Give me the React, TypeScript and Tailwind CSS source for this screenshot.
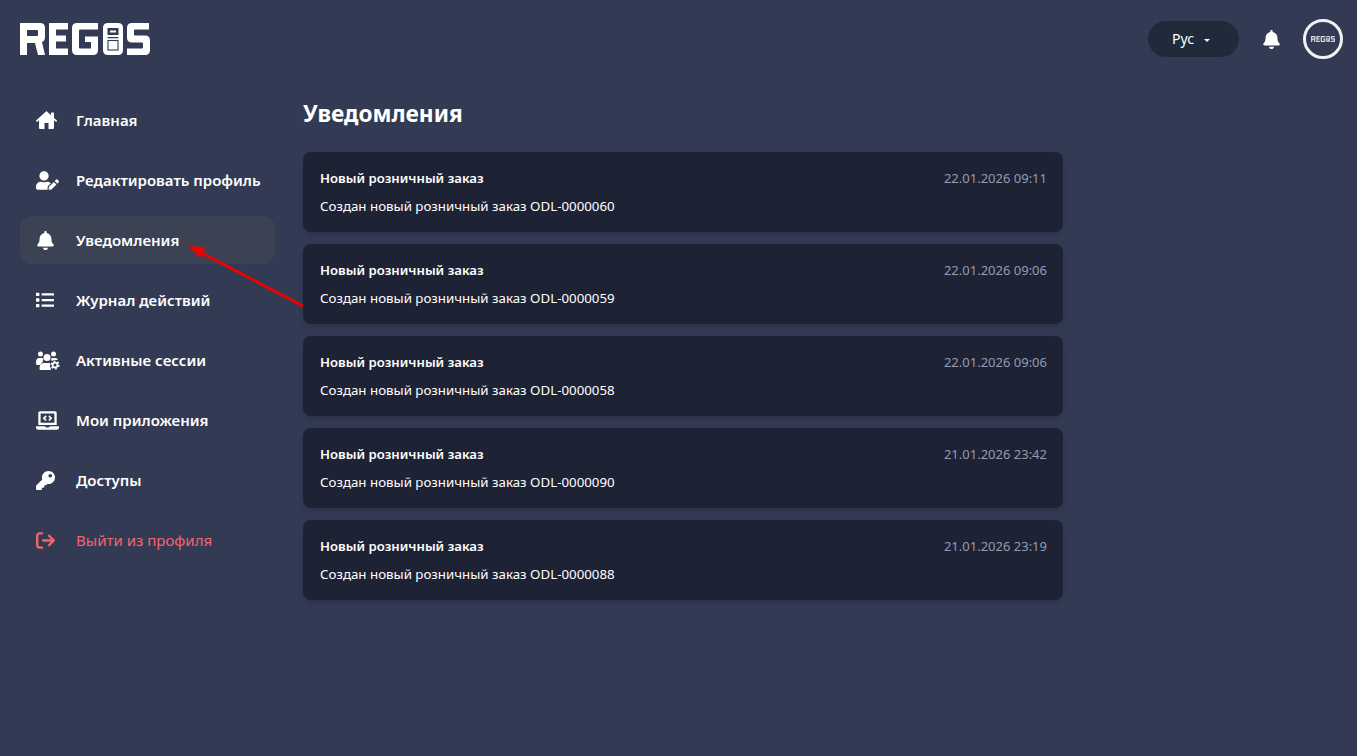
import type { ReactNode } from "react";
import { FaBell, FaKey, FaLaptopCode, FaList, FaUserEdit } from "react-icons/fa";
import { FaArrowRightFromBracket } from "react-icons/fa6";

const HomeIcon = () => (
  <svg width="21" height="18" viewBox="0 0 21 18" fill="currentColor">
    <path d="M10.5 0 .3 9.3q-.5.6 0 1.2t1.2.1L3 9.3V17q0 1 1 1h4.5v-6h4v6H17q1 0 1-1V9.3l1.5 1.3q.7.5 1.2-.1t0-1.2L18 6.9V2q0-.5-.5-.5h-2Q15 1.500 15 2v2.200z" />
  </svg>
);

const SessionsIcon = () => (
  <svg width="24" height="19" viewBox="0 0 24 19" fill="currentColor">
    <circle cx="4.500" cy="3" r="2.500" />
    <circle cx="17.500" cy="3" r="2.500" />
    <circle cx="11" cy="6.500" r="3.500" />
    <path d="M0 12q0-5 3-5h3q1 0 1.500 1-1.500 2-.5 3-2 1-2.500 3H1q-1 0-1-2zM15 8q.5-1 1.500-1h3q1.500 0 2.500 2-3-.5-5 2-1.500-.5-2-3z" />
    <path d="M4.500 19q-1 0-1-1.500 0-5 4-5.500h6q1.500.5 1 2-.500 2 .5 5z" />
    <circle cx="19" cy="14" r="5" fill="#333a54" />
    <circle cx="19" cy="14" r="2.400" fill="none" stroke="currentColor" strokeWidth="1.700" />
    <circle cx="19" cy="14" r="3.900" fill="none" stroke="currentColor" strokeWidth="1.400" strokeDasharray="2 2.080" />
  </svg>
);

const menu: { label: string; icon: ReactNode; active?: boolean; danger?: boolean }[] = [
  { label: "Главная", icon: <HomeIcon /> },
  { label: "Редактировать профиль", icon: <FaUserEdit size={23} /> },
  { label: "Уведомления", icon: <FaBell size={19} />, active: true },
  { label: "Журнал действий", icon: <FaList size={18} /> },
  { label: "Активные сессии", icon: <SessionsIcon /> },
  { label: "Мои приложения", icon: <FaLaptopCode size={23} /> },
  { label: "Доступы", icon: <FaKey size={19} /> },
  { label: "Выйти из профиля", icon: <FaArrowRightFromBracket size={19} />, danger: true },
];

const notifications = [
  { code: "ODL-0000060", date: "22.01.2026 09:11" },
  { code: "ODL-0000059", date: "22.01.2026 09:06" },
  { code: "ODL-0000058", date: "22.01.2026 09:06" },
  { code: "ODL-0000090", date: "21.01.2026 23:42" },
  { code: "ODL-0000088", date: "21.01.2026 23:19" },
];

const Logo = ({ width, color }: { width: number; color: string }) => (
  <svg width={width} height={(width * 32) / 130} viewBox="0 0 130 32" fill={color}>
    <path d="M0 0h20q5 0 5 5v9q0 4-3 5l3 13h-7l-3-12H7v12H0zM7 7v6h10q1 0 1-1V8q0-1-1-1z" fillRule="evenodd" />
    <path d="M29 0h19v6.500H36v6h10v6H36v7h12V32H29z" />
    <path d="M57 0h21v6.500H60q-1 0-1 1v17q0 1 1 1h11V19h-6v-5.500h13V27q0 5-5 5H57q-5 0-5-5V5q0-5 5-5z" />
    <path d="M88 0h10q5 0 5 5v22q0 5-5 5H88q-5 0-5-5V5q0-5 5-5z" />
    <path d="M87.500 5h11v7h-11zM87.500 14h11v1.200h-11z" fill="#333a54" />
    <path d="M90 7.500h6v2h-6z" />
    <rect x="88" y="17.500" width="10" height="9.500" fill="none" stroke="#333a54" strokeWidth="1.100" />
    <path d="M112 0h17v6.500h-14q-1 0-1 1v4q0 1 1 1h10q5 0 5 5V27q0 5-5 5h-18v-6.500h15q1 0 1-1v-4q0-1-1-1h-10q-5 0-5-5V5q0-5 5-5z" />
  </svg>
);

export default function App() {
  return (
    <div className="relative min-h-[756px] bg-[#333a54] font-['Noto_Sans',sans-serif] text-white">
      <header className="flex h-[78px] items-center justify-between pl-5 pr-[14px]">
        <Logo width={130} color="white" />
        <div className="flex items-center">
          <button className="flex h-9 w-[91px] items-center justify-center gap-[10px] rounded-full bg-[#202a3b] pr-[5px] text-sm">
            Рус
            <span className="mt-0.5 border-x-[3px] border-t-[3px] border-x-transparent border-t-white" />
          </button>
          <FaBell size={19} className="ml-[23px]" />
          <div className="ml-[22px] flex h-10 w-10 items-center justify-center rounded-full border-[3px] border-[#f1f1f4]">
            <Logo width={24} color="#d5d7de" />
          </div>
        </div>
      </header>

      <div className="mt-[18px] flex items-start pl-5">
        <nav className="flex w-[255px] flex-col gap-3">
          {menu.map((item) => (
            <a
              key={item.label}
              className={`flex h-12 items-center rounded-xl text-[15px] ${
                item.active ? "bg-[#3a4254]" : ""
              } ${item.danger ? "font-normal text-[#f4646c]" : "font-semibold"}`}
            >
              <span className="flex w-14 shrink-0 items-center pl-4">{item.icon}</span>
              {item.label}
            </a>
          ))}
        </nav>

        <main className="ml-7 w-[760px]">
          <h1 className="text-[22.7px] leading-9 font-bold">Уведомления</h1>
          <div className="mt-5 flex flex-col gap-3">
            {notifications.map((n) => (
              <div key={n.code} className="h-20 rounded-lg bg-[#1e2235] pt-4 pr-4 pl-[17px] shadow-md">
                <div className="flex items-center justify-between">
                  <span className="text-[13.15px] leading-5 font-semibold">Новый розничный заказ</span>
                  <span className="text-[13px] leading-5 text-[#929db0]">{n.date}</span>
                </div>
                <p className="mt-2 text-[13.3px] leading-5">Создан новый розничный заказ {n.code}</p>
              </div>
            ))}
          </div>
        </main>
      </div>

      {/* red annotation arrow drawn over the page */}
      <svg className="absolute top-[240px] left-[180px]" width="130" height="72" viewBox="0 0 130 72">
        <path d="M123 66 16 10" stroke="#f00000" strokeWidth="3" />
        <path d="M8 6 26 7 20 18z" fill="#f00000" />
      </svg>
    </div>
  );
}
